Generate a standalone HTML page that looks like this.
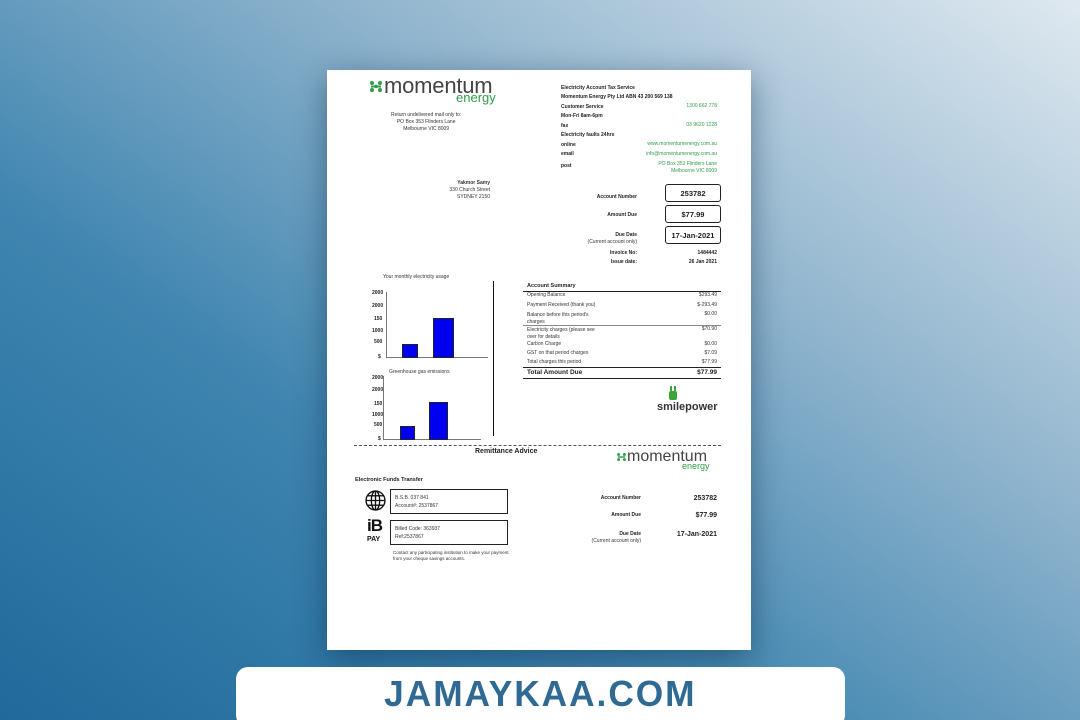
<!DOCTYPE html>
<html><head><meta charset="utf-8"><style>
*{margin:0;padding:0;box-sizing:border-box}
html,body{width:1080px;height:720px;overflow:hidden}
body{position:relative;font-family:"Liberation Sans",sans-serif;
background:linear-gradient(35deg,#1f6a9b 0%,#3f85b0 35%,#8fb4cd 65%,#dfe9f0 100%);}
.doc{position:absolute;left:327px;top:70px;width:424px;height:580px;background:#fff;box-shadow:0 8px 30px rgba(0,30,60,.45);}
.a{position:absolute;white-space:nowrap;color:#333;font-size:5px;line-height:1}
.b{font-weight:bold;color:#222}
.g{color:#2e9e48}
.r{text-align:right}
.box{position:absolute;border:1px solid #222;border-radius:3px;font-weight:bold;font-size:7.5px;text-align:center;color:#222}
.banner{position:absolute;left:236px;top:667px;width:609px;height:60px;background:#fff;border-radius:12px;text-align:center}
.banner span{display:inline-block;font-weight:bold;font-size:36px;color:#2e6a93;letter-spacing:2px;margin-top:6px;transform:scaleX(.98);font-family:"Liberation Sans",sans-serif}
.bar{position:absolute;background:#0000f0;border:1px solid #222}
.ax{position:absolute;background:#777}
.logo{position:absolute;color:#444;line-height:1}
hr{position:absolute;border:0}
</style></head><body>
<div class="doc">
 <svg style="position:absolute;left:43px;top:11px" width="12" height="11" viewBox="0 0 12 11" fill="#2e9e48"><circle cx="2" cy="2" r="2"/><circle cx="10" cy="2" r="2"/><circle cx="2" cy="9" r="2"/><circle cx="10" cy="9" r="2"/><circle cx="6" cy="5.5" r="1.8"/><rect x="1" y="4.5" width="10" height="2"/></svg>
 <div class="logo" style="left:57px;top:5px;font-size:22px;letter-spacing:-.2px">momentum</div>
 <div class="logo" style="left:129px;top:21px;font-size:13px;color:#2e9e48">energy</div>
 <div class="a" style="left:64px;top:42px;text-align:center;line-height:1.4">Return undelivered mail only to:<br>PO Box 353 Flinders Lane<br>Melbourne VIC 8009</div>
 <div class="a b" style="left:234px;top:16px">Electricity Account Tax Service</div>
 <div class="a b" style="left:234px;top:25px">Momentum Energy Pty Ltd ABN 43 200 569 138</div>
 <div class="a b" style="left:234px;top:35px">Customer Service</div><div class="a g r" style="right:34px;top:34px">1300 662 778</div>
 <div class="a b" style="left:234px;top:44px">Mon-Fri 8am-6pm</div>
 <div class="a b" style="left:234px;top:54px">fax</div><div class="a g r" style="right:34px;top:53px">03 9620 1228</div>
 <div class="a b" style="left:234px;top:63px">Electricity faults 24hrs</div>
 <div class="a b" style="left:234px;top:73px">online</div><div class="a g r" style="right:34px;top:72px">www.momentumenergy.com.au</div>
 <div class="a b" style="left:234px;top:82px">email</div><div class="a g r" style="right:34px;top:82px">info@momentumenergy.com.au</div>
 <div class="a b" style="left:234px;top:94px">post</div><div class="a g r" style="right:34px;top:91px;line-height:1.4">PO Box 353 Flinders Lane<br>Melbourne VIC 8009</div>
 <div class="a r" style="right:261px;top:110px;line-height:1.4"><b>Yakmor Samy</b><br>330 Church Street<br>SYDNEY 2150</div>
 <div class="a b r" style="right:114px;top:125px">Account Number</div>
 <div class="box" style="left:338px;top:114px;width:56px;height:18px;padding-top:4px">253782</div>
 <div class="a b r" style="right:114px;top:143px">Amount Due</div>
 <div class="box" style="left:338px;top:135px;width:56px;height:18px;padding-top:4px">$77.99</div>
 <div class="a b r" style="right:114px;top:163px">Due Date</div>
 <div class="a r" style="right:114px;top:170px">(Current account only)</div>
 <div class="box" style="left:338px;top:156px;width:56px;height:18px;padding-top:4px">17-Jan-2021</div>
 <div class="a b r" style="right:114px;top:181px">Invoice No:</div><div class="a b r" style="right:34px;top:181px">1484442</div>
 <div class="a b r" style="right:114px;top:190px">Issue date:</div><div class="a b r" style="right:34px;top:190px">26 Jan 2021</div>
 <div class="a" style="left:56px;top:205px">Your monthly electricity usage</div>
 <div class="a b" style="left:45px;top:221px">2000</div>
 <div class="a b" style="left:45px;top:234px">2000</div>
 <div class="a b" style="left:47px;top:247px">150</div>
 <div class="a b" style="left:45px;top:259px">1000</div>
 <div class="a b" style="left:47px;top:270px">500</div>
 <div class="a b" style="left:51px;top:285px">$</div>
 <div class="ax" style="left:59px;top:222px;width:1px;height:66px"></div>
 <div class="ax" style="left:59px;top:287px;width:102px;height:1px"></div>
 <div class="bar" style="left:75px;top:274px;width:16px;height:14px"></div>
 <div class="bar" style="left:106px;top:248px;width:21px;height:40px"></div>
 <div class="ax" style="left:166px;top:211px;width:1px;height:155px;background:#111"></div>
 <div class="a" style="left:62px;top:300px">Greenhouse gas emissions</div>
 <div class="a b" style="left:45px;top:306px">2000</div>
 <div class="a b" style="left:45px;top:318px">2000</div>
 <div class="a b" style="left:47px;top:332px">150</div>
 <div class="a b" style="left:45px;top:343px">1000</div>
 <div class="a b" style="left:47px;top:353px">500</div>
 <div class="a b" style="left:51px;top:367px">$</div>
 <div class="ax" style="left:56px;top:306px;width:1px;height:64px"></div>
 <div class="ax" style="left:56px;top:369px;width:98px;height:1px"></div>
 <div class="bar" style="left:73px;top:356px;width:15px;height:14px"></div>
 <div class="bar" style="left:102px;top:332px;width:19px;height:38px"></div>
 <div class="a b" style="left:200px;top:214px;font-size:5.5px">Account Summary</div>
 <hr style="left:196px;top:221px;width:198px;height:1px;background:#222">
 <div class="a" style="left:200px;top:223px">Opening Balance</div><div class="a r" style="right:34px;top:223px">$293.49</div>
 <div class="a" style="left:200px;top:233px">Payment Received (thank you)</div><div class="a r" style="right:34px;top:233px">$-293.49</div>
 <div class="a" style="left:200px;top:242px;line-height:1.4">Balance before this period's<br>charges</div><div class="a r" style="right:34px;top:242px">$0.00</div>
 <hr style="left:196px;top:255px;width:198px;height:1px;background:#888">
 <div class="a" style="left:200px;top:257px;line-height:1.4">Electricity charges (please see<br>over for details</div><div class="a r" style="right:34px;top:257px">$70.90</div>
 <div class="a" style="left:200px;top:272px">Carbon Charge</div><div class="a r" style="right:34px;top:272px">$0.00</div>
 <div class="a" style="left:200px;top:281px">GST on that period charges</div><div class="a r" style="right:34px;top:281px">$7.09</div>
 <div class="a" style="left:200px;top:290px">Total charges this period</div><div class="a r" style="right:34px;top:290px">$77.99</div>
 <hr style="left:196px;top:297px;width:198px;height:1px;background:#222">
 <div class="a b" style="left:200px;top:300px;font-size:6.5px">Total Amount Due</div><div class="a b r" style="right:34px;top:300px;font-size:6.5px">$77.99</div>
 <hr style="left:196px;top:308px;width:198px;height:1px;background:#222">
 <div style="position:absolute;left:342px;top:321px;width:8px;height:9px;background:#3aa63a;border-radius:2px"></div>
 <div style="position:absolute;left:343px;top:316px;width:1.5px;height:5px;background:#3aa63a"></div>
 <div style="position:absolute;left:347px;top:316px;width:1.5px;height:5px;background:#3aa63a"></div>
 <div class="a b" style="left:330px;top:332px;font-size:11px;color:#333">smilepower</div>
 <hr style="left:27px;top:375px;width:367px;height:0;border-top:1px dashed #555">
 <div class="a b" style="left:148px;top:378px;font-size:7px">Remittance Advice</div>
 <svg style="position:absolute;left:290px;top:383px" width="9" height="8" viewBox="0 0 12 11" fill="#2e9e48"><circle cx="2" cy="2" r="2"/><circle cx="10" cy="2" r="2"/><circle cx="2" cy="9" r="2"/><circle cx="10" cy="9" r="2"/><rect x="1" y="4.5" width="10" height="2"/></svg>
 <div class="logo" style="left:300px;top:379px;font-size:16px">momentum</div>
 <div class="logo" style="left:355px;top:392px;font-size:9px;color:#2e9e48">energy</div>
 <div class="a b" style="left:28px;top:408px;font-size:5.5px">Electronic Funds Transfer</div>
 <svg style="position:absolute;left:38px;top:420px" width="21" height="21" viewBox="0 0 20 20" fill="none" stroke="#111" stroke-width="1.3"><circle cx="10" cy="10" r="9"/><ellipse cx="10" cy="10" rx="4" ry="9"/><line x1="10" y1="1" x2="10" y2="19"/><line x1="1" y1="10" x2="19" y2="10"/><line x1="2.5" y1="5.5" x2="17.5" y2="5.5"/><line x1="2.5" y1="14.5" x2="17.5" y2="14.5"/></svg>
 <div style="position:absolute;left:63px;top:419px;width:118px;height:25px;border:1px solid #222"></div>
 <div class="a" style="left:68px;top:424px;line-height:1.6">B.S.B. 037 841<br>Account#: 2537867</div>
 <div class="a b" style="left:40px;top:447px;font-size:17px;color:#111;letter-spacing:-1px">iB</div>
 <div class="a b" style="left:40px;top:466px;font-size:7px;color:#111">PAY</div>
 <div style="position:absolute;left:63px;top:450px;width:118px;height:25px;border:1px solid #222"></div>
 <div class="a" style="left:68px;top:455px;line-height:1.6">Billed Code: 363937<br>Ref:2537867</div>
 <div class="a" style="left:66px;top:480px;line-height:1.4;font-size:4.5px">Contact any participating institution to make your payment<br>from your cheque savings accounts.</div>
 <div class="a b r" style="right:110px;top:426px">Account Number</div><div class="a b r" style="right:34px;top:425px;font-size:7px">253782</div>
 <div class="a b r" style="right:110px;top:443px">Amount Due</div><div class="a b r" style="right:34px;top:442px;font-size:7px">$77.99</div>
 <div class="a b r" style="right:110px;top:462px">Due Date</div><div class="a r" style="right:110px;top:469px">(Current account only)</div><div class="a b r" style="right:34px;top:461px;font-size:7px">17-Jan-2021</div>
</div>
<div class="banner"><span>JAMAYKAA.COM</span></div>
</body></html>
